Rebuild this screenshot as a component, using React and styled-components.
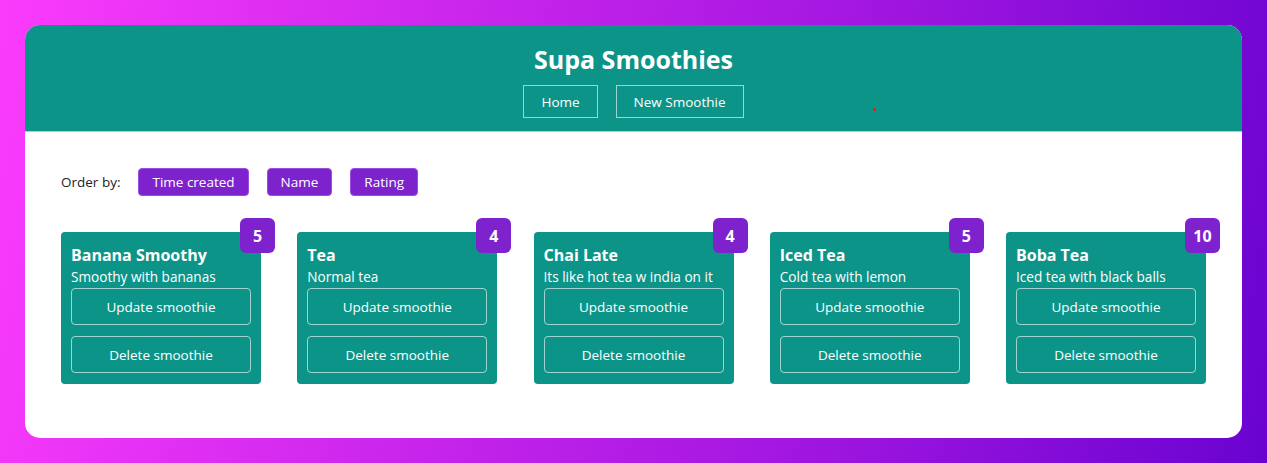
import React from "react";
import styled, { createGlobalStyle } from "styled-components";

const GlobalStyle = createGlobalStyle`
  html, body {
    margin: 0;
    padding: 0;
  }
  body {
    font-family: "Open Sans", "Noto Sans", sans-serif;
    background: linear-gradient(100deg, #fb3bfc 0%, #c323ea 40%, #9a14de 70%, #6a03d0 100%);
    min-height: 463px;
  }
  * { box-sizing: border-box; }
`;

const Page = styled.div`
  padding: 25px;
  height: 463px;
`;

const Panel = styled.div`
  background: #ffffff;
  border-radius: 15px;
  overflow: hidden;
  height: 413px;
`;

const Header = styled.header`
  background: #0d9488;
  padding: 17px 0 13px;
  display: flex;
  flex-direction: column;
  align-items: center;
  border-bottom: 1px solid #9fd8d1;
  position: relative;
`;

const Title = styled.h1`
  margin: 0 0 9px;
  color: #ffffff;
  font-size: 25px;
  line-height: 34px;
  font-weight: 700;
`;

const Nav = styled.nav`
  display: flex;
  gap: 18px;
`;

const NavLink = styled.a`
  display: flex;
  align-items: center;
  justify-content: center;
  height: 33px;
  padding: 0 17px;
  border: 1px solid rgba(255, 255, 255, 0.6);
  color: #ffffff;
  font-size: 13.5px;
  text-decoration: none;
`;

const Dot = styled.span`
  position: absolute;
  left: 848px;
  top: 83px;
  width: 3px;
  height: 3px;
  border-radius: 50%;
  background: #e11d1d;
`;

const Main = styled.main`
  padding: 36px 36px 0;
`;

const OrderRow = styled.div`
  display: flex;
  align-items: center;
  gap: 18px;
  font-size: 13.5px;
  color: #222;
`;

const OrderButton = styled.button`
  height: 28px;
  padding: 0 13px;
  border: 1px solid #9b4ddb;
  border-radius: 4px;
  background: #7e22ce;
  color: #ffffff;
  font-family: inherit;
  font-size: 13.5px;
`;

const Grid = styled.div`
  display: grid;
  grid-template-columns: repeat(5, 200px);
  justify-content: space-between;
  margin-top: 36px;
`;

const Card = styled.div`
  position: relative;
  background: #0d9488;
  border-radius: 4px;
  padding: 11px 10px 10px;
  height: 152px;
  color: #ffffff;
`;

const Badge = styled.span`
  position: absolute;
  top: -14px;
  right: -14px;
  width: 35px;
  height: 35px;
  border-radius: 6px;
  background: #7e22ce;
  display: flex;
  align-items: center;
  justify-content: center;
  font-size: 16px;
  font-weight: 700;
`;

const CardTitle = styled.h3`
  margin: 0;
  font-size: 16px;
  line-height: 24px;
  font-weight: 700;
`;

const CardText = styled.p`
  margin: 0 0 1px;
  font-size: 13.6px;
  line-height: 20px;
  white-space: nowrap;
`;

const Actions = styled.div`
  display: flex;
  flex-direction: column;
  gap: 11px;
`;

const CardButton = styled.button`
  height: 37px;
  width: 100%;
  background: transparent;
  border: 1px solid rgba(255, 255, 255, 0.6);
  border-radius: 4px;
  color: #ffffff;
  font-family: inherit;
  font-size: 13.5px;
`;

const smoothies = [
  { title: "Banana Smoothy", method: "Smoothy with bananas", rating: 5 },
  { title: "Tea", method: "Normal tea", rating: 4 },
  { title: "Chai Late", method: "Its like hot tea w india on it", rating: 4 },
  { title: "Iced Tea", method: "Cold tea with lemon", rating: 5 },
  { title: "Boba Tea", method: "Iced tea with black balls", rating: 10 },
];

function SmoothieCard({ smoothie }) {
  return (
    <Card>
      <CardTitle>{smoothie.title}</CardTitle>
      <CardText>{smoothie.method}</CardText>
      <Actions>
        <CardButton>Update smoothie</CardButton>
        <CardButton>Delete smoothie</CardButton>
      </Actions>
      <Badge>{smoothie.rating}</Badge>
    </Card>
  );
}

export default function App() {
  return (
    <>
      <GlobalStyle />
      <Page>
        <Panel>
          <Header>
            <Title>Supa Smoothies</Title>
            <Nav>
              <NavLink href="#">Home</NavLink>
              <NavLink href="#">New Smoothie</NavLink>
            </Nav>
            <Dot />
          </Header>
          <Main>
            <OrderRow>
              <span>Order by:</span>
              <OrderButton>Time created</OrderButton>
              <OrderButton>Name</OrderButton>
              <OrderButton>Rating</OrderButton>
            </OrderRow>
            <Grid>
              {smoothies.map((s) => (
                <SmoothieCard key={s.title} smoothie={s} />
              ))}
            </Grid>
          </Main>
        </Panel>
      </Page>
    </>
  );
}
